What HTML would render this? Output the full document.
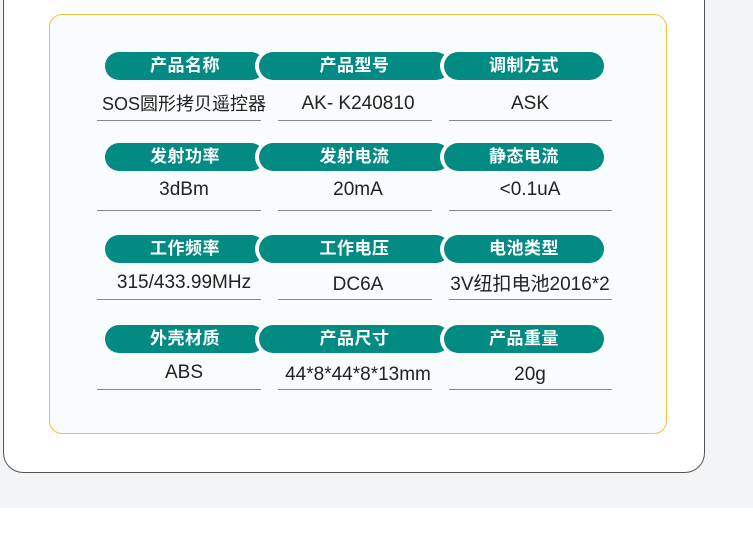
<!DOCTYPE html>
<html><head><meta charset="utf-8"><style>
*{margin:0;padding:0;box-sizing:border-box}
body{width:753px;height:537px;background:#fff;position:relative;overflow:hidden;font-family:"Liberation Sans","Noto Sans CJK SC",sans-serif}
.gray{position:absolute;left:0;top:0;width:753px;height:508px;background:#f3f4f6}
.panel{position:absolute;left:3px;top:-30px;width:702px;height:503px;background:#fff;border:1.3px solid #555;border-top:none;border-radius:0 0 20px 20px}
.card{position:absolute;left:49px;top:14px;width:618px;height:420px;background:#f8fcfd;border:1.3px solid #f6c03c;border-radius:13px}
.p{position:absolute;height:28px;border-radius:14px;background:#018b83;color:#fff;font-weight:bold;font-size:17px;line-height:28px;text-align:center;letter-spacing:0.5px}
.w{position:absolute;height:32px;border-radius:16px;background:#fff}
.v{position:absolute;font-size:19px;color:#222;text-align:center;height:24px;line-height:24px;white-space:nowrap}
.u{position:absolute;height:1px;background:#888}
</style></head><body>
<div class="gray"></div>
<div class="panel"></div>
<div class="card"></div>
<div id="c"></div>
<script>
var rows=[[52,["产品名称","产品型号","调制方式"],["SOS圆形拷贝遥控器","AK- K240810","ASK"],52,68],
[143,["发射功率","发射电流","静态电流"],["3dBm","20mA","&lt;0.1uA"],47,67],
[235,["工作频率","工作电压","电池类型"],["315/433.99MHz","DC6A","3V纽扣电池2016*2"],48,64],
[325,["外壳材质","产品尺寸","产品重量"],["ABS","44*8*44*8*13mm","20g"],48,64]];
var h="";
rows.forEach(function(r){var y=r[0];
h+='<div class="p" style="left:105px;top:'+y+'px;width:160px">'+r[1][0]+'</div>';
h+='<div class="w" style="left:255px;top:'+(y-2)+'px;width:198px"></div>';
h+='<div class="p" style="left:259px;top:'+y+'px;width:191px">'+r[1][1]+'</div>';
h+='<div class="w" style="left:440px;top:'+(y-2)+'px;width:166px"></div>';
h+='<div class="p" style="left:444px;top:'+y+'px;width:160px">'+r[1][2]+'</div>';
var vy=y+r[3]-12;
h+='<div class="v" style="left:95px;top:'+(vy)+'px;width:178px;'+(y==52?'font-size:18px':'')+'">'+r[2][0]+'</div>';
h+='<div class="v" style="left:268px;top:'+(vy+(y>=235?2:0))+'px;width:180px">'+r[2][1]+'</div>';
h+='<div class="v" style="left:436px;top:'+(vy+(y>=235?2:0))+'px;width:188px">'+r[2][2]+'</div>';
var uy=y+r[4];
h+='<div class="u" style="left:97px;top:'+uy+'px;width:164px"></div>';
h+='<div class="u" style="left:278px;top:'+uy+'px;width:154px"></div>';
h+='<div class="u" style="left:449px;top:'+uy+'px;width:163px"></div>';
});
document.getElementById("c").innerHTML=h;
</script>
</body></html>
